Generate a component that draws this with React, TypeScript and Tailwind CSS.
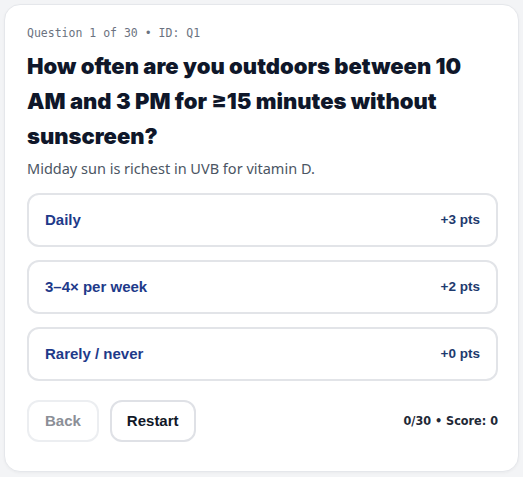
import React from "react";

type Option = { label: string; pts: number };

const OPTIONS: Option[] = [
  { label: "Daily", pts: 3 },
  { label: "3–4× per week", pts: 2 },
  { label: "Rarely / never", pts: 0 },
];

export default function App() {
  return (
    <div className="min-h-screen bg-[#f3f4f6] p-[4px]">
      <div className="rounded-[16px] border border-[#e5e7eb] bg-white pl-[22px] pr-[20px] pt-[20px] pb-[29px] shadow-[0_1px_3px_rgba(0,0,0,0.04)]">
        <div className="font-['DejaVu_Sans_Mono',monospace] text-[11.5px] leading-[16px] text-[#6b7280]">
          Question 1 of 30 • ID: Q1
        </div>
        <h1 className="mt-[8px] font-['Inter',sans-serif] text-[22px] font-black leading-[35px] text-[#0f172a]">
          How often are you outdoors between 10 AM and 3 PM for ≥15 minutes without sunscreen?
        </h1>
        <p className="mt-[4px] font-['Noto_Sans',sans-serif] text-[14.5px] leading-[20px] text-[#4b5563]">
          Midday sun is richest in UVB for vitamin D.
        </p>
        <div className="mt-[15px] flex flex-col gap-[13px]">
          {OPTIONS.map((o) => (
            <button
              key={o.label}
              type="button"
              className="flex h-[54px] items-center justify-between rounded-[12px] border-2 border-[#e2e4e8] bg-white px-[16px] font-['Liberation_Sans',sans-serif] text-[15px] font-bold text-[#1e3a8a]"
            >
              <span>{o.label}</span>
              <span className="text-[13.5px] text-[#1e3a6e]">+{o.pts} pts</span>
            </button>
          ))}
        </div>
        <div className="mt-[19px] flex items-center gap-[11px] font-['Liberation_Sans',sans-serif]">
          <button
            type="button"
            disabled
            className="h-[42px] rounded-[12px] border-2 border-[#eceef1] bg-white px-[16px] text-[15px] font-bold text-[#8b8f97]"
          >
            Back
          </button>
          <button
            type="button"
            className="h-[42px] rounded-[12px] border-2 border-[#dfe1e6] bg-white px-[15px] text-[15px] font-bold text-[#111827]"
          >
            Restart
          </button>
          <div className="ml-auto font-['DejaVu_Sans_Condensed','DejaVu_Sans',sans-serif] text-[12.5px] font-bold text-[#1f2937]">
            0/30 • Score: 0
          </div>
        </div>
      </div>
    </div>
  );
}
